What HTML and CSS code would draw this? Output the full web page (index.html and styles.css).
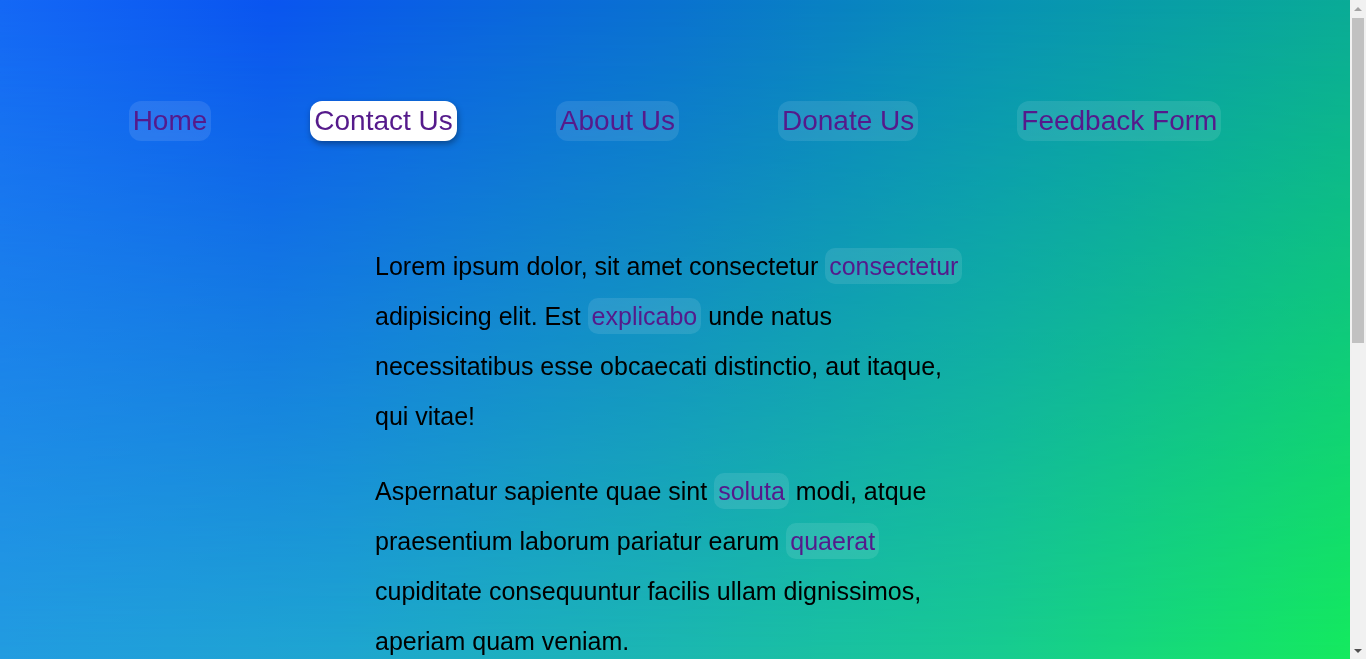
FILE: index.html
```html
<!DOCTYPE html>
<html lang="en">
<head>
<meta charset="utf-8">
<title>Contact Us</title>
<link rel="stylesheet" href="styles.css">
</head>
<body>
<div class="page">
  <nav class="nav">
    <a class="nav-link" href="#">Home</a>
    <a class="nav-link active" href="#">Contact Us</a>
    <a class="nav-link" href="#">About Us</a>
    <a class="nav-link" href="#">Donate Us</a>
    <a class="nav-link" href="#">Feedback Form</a>
  </nav>
  <main class="content">
    <p>Lorem ipsum dolor, sit amet consectetur <a class="tag" href="#">consectetur</a> adipisicing elit. Est <a class="tag" href="#">explicabo</a> unde natus necessitatibus esse obcaecati distinctio, aut itaque, qui vitae!</p>
    <p>Aspernatur sapiente quae sint <a class="tag" href="#">soluta</a> modi, atque praesentium laborum pariatur earum <a class="tag" href="#">quaerat</a> cupiditate consequuntur facilis ullam dignissimos, aperiam quam veniam.</p>
    <p>Quibusdam <a class="tag" href="#">voluptate</a> nihil maiores corporis, tempora sequi vero officiis dolores quas deleniti impedit ipsa.</p>
  </main>
</div>
<div class="scrollbar" aria-hidden="true">
  <div class="sb-arrow sb-up"></div>
  <div class="sb-thumb"></div>
  <div class="sb-arrow sb-down"></div>
</div>
</body>
</html>
```
FILE: styles.css
```css
html {
  min-height: 100%;
  background: #f1f1f1;
}

body {
  margin: 0;
  font-family: "Liberation Sans", Arial, sans-serif;
  color: #000;
}

.page {
  position: relative;
  margin-right: 16px;
  min-height: 100vh;
  background: linear-gradient(to right, #1468f6 0px, #0a55f0 270px, #0a72d0 675px, #0892b5 1000px, #0aab97 100%) fixed;
  background-size: calc(100% - 16px) 100%;
  background-repeat: no-repeat;
}

.page::before {
  content: "";
  position: fixed;
  top: 0;
  left: 0;
  bottom: 0;
  right: 16px;
  background: linear-gradient(to right, #229ce0 0%, #1ea6d0 25%, #1bb8b0 50%, #17cc90 74%, #14ea5e 100%);
  -webkit-mask-image: linear-gradient(to bottom, transparent, #000);
  mask-image: linear-gradient(to bottom, transparent, #000);
}

.nav {
  position: relative;
  display: flex;
  justify-content: center;
  gap: 99px;
  padding: 101px 0 100px;
}

.nav-link {
  display: inline-block;
  padding: 4px;
  font-size: 28px;
  color: #551a8b;
  text-decoration: none;
  background: rgba(255, 255, 255, 0.1);
  border-radius: 12px;
}

.nav-link.active {
  background: #fff;
  box-shadow: 1px 3px 6px rgba(0, 0, 0, 0.35);
}

.content {
  position: relative;
  width: 600px;
  margin: 0 auto;
}

.content p {
  margin: 0 0 25px;
  font-size: 25px;
  line-height: 2;
}

.tag {
  padding: 4px;
  color: #551a8b;
  text-decoration: none;
  background: rgba(255, 255, 255, 0.1);
  border-radius: 10px;
}

.scrollbar {
  position: fixed;
  top: 0;
  right: 0;
  bottom: 0;
  width: 16px;
  background: #f1f1f1;
  display: flex;
  flex-direction: column;
  align-items: center;
}

.sb-arrow {
  width: 16px;
  height: 17px;
  display: flex;
  align-items: center;
  justify-content: center;
}

.sb-up::after {
  content: "";
  border-left: 4px solid transparent;
  border-right: 4px solid transparent;
  border-bottom: 4px solid #a3a3a3;
}

.sb-down {
  margin-top: auto;
}

.sb-down::after {
  content: "";
  border-left: 4px solid transparent;
  border-right: 4px solid transparent;
  border-top: 4px solid #505050;
}

.sb-thumb {
  width: 12px;
  height: 325px;
  margin-top: 1px;
  background: #c1c1c1;
}
```
